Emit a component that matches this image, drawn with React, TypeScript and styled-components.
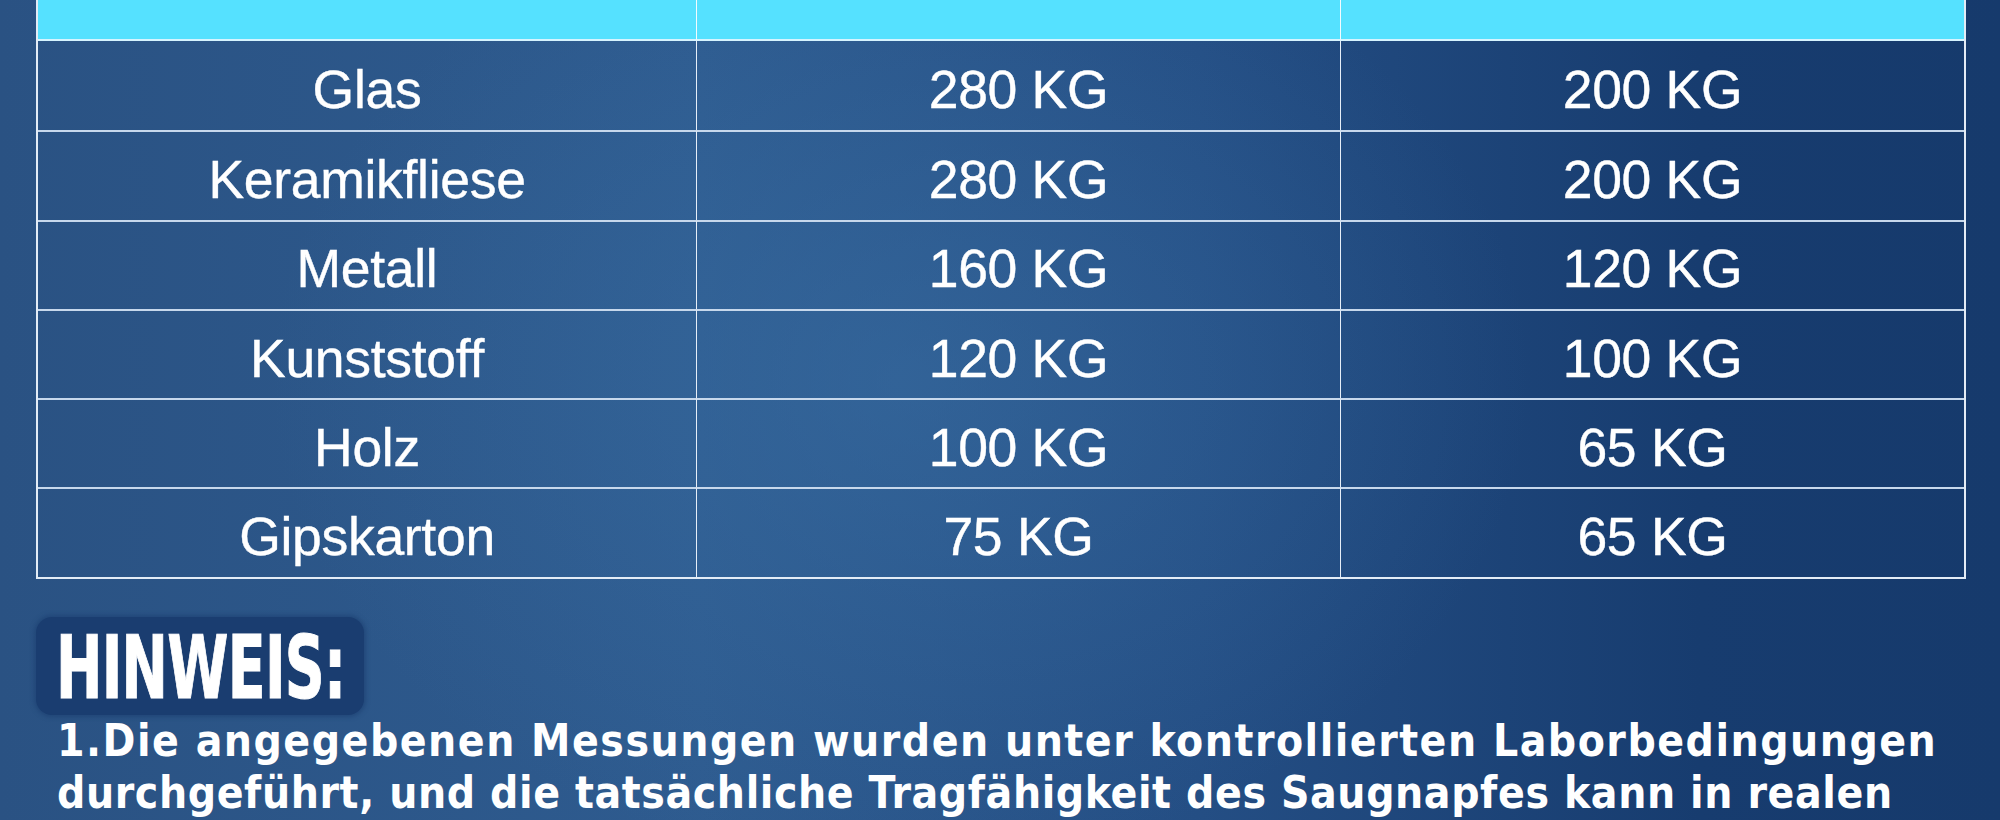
import React from 'react'
import styled, { createGlobalStyle } from 'styled-components'

const GlobalStyle = createGlobalStyle`
  html, body {
    margin: 0;
    padding: 0;
    background: #1d4477;
  }
`

const Page = styled.div`
  box-sizing: border-box;
  width: 2000px;
  height: 820px;
  overflow: hidden;
  padding: 0 34px 0 36px;
  background:
    radial-gradient(ellipse 900px 700px at 900px 380px, rgba(58, 112, 165, 0.5), rgba(58, 112, 165, 0) 70%),
    linear-gradient(90deg, #2a5283 0%, #2e5b8f 35%, #244e84 60%, #173c6f 85%, #163a6c 100%);
  font-family: 'Liberation Sans', Arial, sans-serif;
  color: #ffffff;
`

const Table = styled.div`
  display: grid;
  grid-template-columns: 659px 644px 1fr;
  border-left: 2px solid #e3ecf6;
  border-right: 2px solid #e3ecf6;
  border-bottom: 2px solid #e3ecf6;
`

const HeadCell = styled.div<{ $last?: boolean }>`
  height: 39px;
  background: #55e1ff;
  border-right: ${p => (p.$last ? 'none' : '1.5px solid #f2fbff')};
  border-bottom: 2px solid #d6f4ff;
`

const Cell = styled.div<{ $last?: boolean; $top?: boolean }>`
  box-sizing: border-box;
  height: 89.3px;
  display: flex;
  align-items: center;
  justify-content: center;
  padding-top: 8px;
  border-right: ${p => (p.$last ? 'none' : '1.5px solid #e6eef8')};
  border-top: ${p => (p.$top ? 'none' : '2px solid #c7d8ec')};
  font-size: 53.5px;
  letter-spacing: -0.3px;
  line-height: 1;
  -webkit-text-stroke: 0.4px #ffffff;
`

const Note = styled.section`
  padding-top: 38px;
`

const Badge = styled.div`
  box-sizing: border-box;
  width: 328px;
  height: 98px;
  display: flex;
  align-items: center;
  padding-left: 20px;
  padding-top: 4px;
  background: #1a3d70;
  border-radius: 16px;
  box-shadow: 0 0 4px 2px rgba(26, 61, 112, 0.6);
`

const BadgeText = styled.span`
  display: inline-block;
  font-family: 'DejaVu Sans', sans-serif;
  font-stretch: condensed;
  font-weight: 700;
  font-size: 88px;
  line-height: 1;
  letter-spacing: -1px;
  transform: scaleX(0.7);
  transform-origin: left center;
  white-space: nowrap;
  -webkit-text-stroke: 1px #ffffff;
`

const Body = styled.p`
  margin: 0;
  padding-left: 21px;
  font-family: 'DejaVu Sans', sans-serif;
  font-stretch: condensed;
  font-weight: 700;
  font-size: 44px;
  letter-spacing: 1.5px;
  line-height: 52px;
`

const Line = styled.span<{ $tight?: boolean }>`
  display: block;
  white-space: nowrap;
  letter-spacing: ${p => (p.$tight ? '0.6px' : '1.5px')};
`

const rows: [string, string, string][] = [
  ['Glas', '280 KG', '200 KG'],
  ['Keramikfliese', '280 KG', '200 KG'],
  ['Metall', '160 KG', '120 KG'],
  ['Kunststoff', '120 KG', '100 KG'],
  ['Holz', '100 KG', '65 KG'],
  ['Gipskarton', '75 KG', '65 KG'],
]

const App: React.FC = () => {
  return (
    <Page>
      <GlobalStyle />
      <Table>
        <HeadCell />
        <HeadCell />
        <HeadCell $last />
        {rows.map((row, i) =>
          row.map((value, j) => (
            <Cell key={`${i}-${j}`} $last={j === 2} $top={i === 0}>
              {value}
            </Cell>
          ))
        )}
      </Table>
      <Note>
        <Badge>
          <BadgeText>HINWEIS:</BadgeText>
        </Badge>
        <Body>
          <Line>1.Die angegebenen Messungen wurden unter kontrollierten Laborbedingungen</Line>
          <Line $tight>
            durchgeführt, und die tatsächliche Tragfähigkeit des Saugnapfes kann in realen
          </Line>
        </Body>
      </Note>
    </Page>
  )
}

export default App
